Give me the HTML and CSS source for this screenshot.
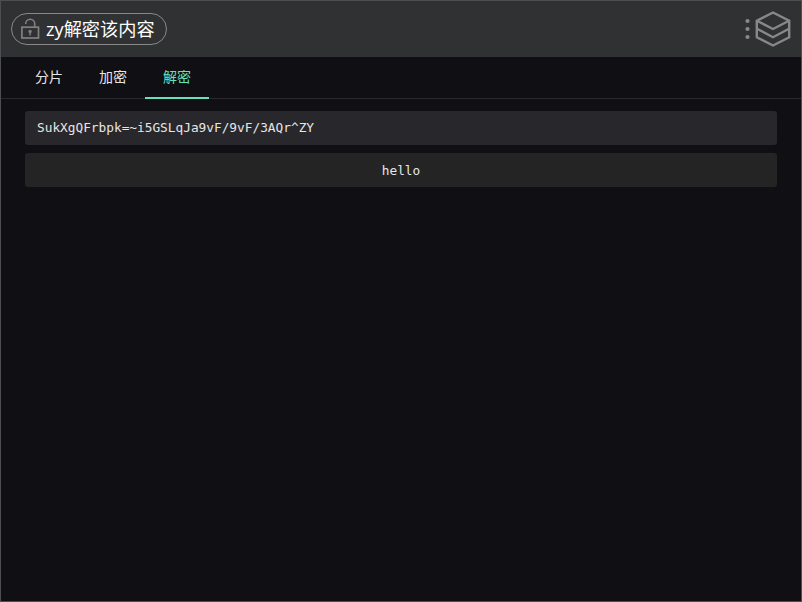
FILE: index.html
```
<!DOCTYPE html>
<html lang="zh-CN">
<head>
<meta charset="utf-8">
<title>zy解密该内容</title>
<link rel="stylesheet" href="styles.css">
</head>
<body>
<div class="window">
  <header class="header">
    <div class="pill">
      <svg class="lock" width="20" height="22" viewBox="0 0 20 22" fill="none" stroke="#808080" stroke-width="1.7">
        <rect x="1.9" y="9.2" width="16.6" height="10.8"/>
        <path d="M5.7 6V5.7a4.5 4.4 0 0 1 9 0V9" stroke-width="1.6"/>
        <path d="M10.1 13v4.5" stroke-width="1.4"/>
        <circle cx="10.1" cy="13.4" r="1.6" fill="#808080" stroke="none"/>
      </svg>
      <span class="title">zy解密该内容</span>
    </div>
    <div class="brand">
      <svg class="dots" width="5" height="22" viewBox="0 0 5 22" fill="#888">
        <circle cx="2.5" cy="3" r="2.1"/><circle cx="2.5" cy="11" r="2.1"/><circle cx="2.5" cy="19" r="2.1"/>
      </svg>
      <svg class="logo" width="36" height="36" viewBox="0 0 36 36" fill="none" stroke="#888" stroke-width="2.4">
        <path d="M18 1.5 34.2 9.7V26.3L18 34.5 1.8 26.3V9.7Z"/>
        <path d="M2 9.7 18 18 34 9.7M2 17.8 18 26.2 34 17.8"/>
      </svg>
    </div>
  </header>
  <nav class="tabs">
    <div class="tab">分片</div>
    <div class="tab">加密</div>
    <div class="tab active">解密</div>
  </nav>
  <main class="content">
    <div class="field">SukXgQFrbpk=~i5GSLqJa9vF/9vF/3AQr^ZY</div>
    <div class="result">hello</div>
  </main>
</div>
</body>
</html>
```
FILE: styles.css
```
* { box-sizing: border-box; }
body { margin: 0; background: #101014; }
.window {
  height: 602px;
  border: 1px solid #4d4e4f;
  background: #101014;
  color: #e6e6e6;
  font-family: "Noto Sans CJK SC", sans-serif;
}
.header {
  display: flex;
  align-items: center;
  justify-content: space-between;
  height: 56px;
  padding: 0 10px;
  background: #303133;
}
.pill {
  display: flex;
  align-items: center;
  width: 156px;
  height: 32px;
  padding-left: 8px;
  border: 1px solid #888;
  border-radius: 16px;
}
.lock { flex: none; }
.title {
  margin-left: 6px;
  color: #fff;
  font-family: "Open Sans", "Noto Sans CJK SC", sans-serif;
  font-size: 18.2px;
  line-height: 30px;
  white-space: nowrap;
}
.brand { display: flex; align-items: center; gap: 5px; }
.dots { margin-bottom: 0; }
.tabs {
  display: flex;
  height: 42px;
  padding-left: 16px;
  border-bottom: 1px solid #2a2a2e;
}
.tab {
  width: 64px;
  height: 42px;
  font-size: 14px;
  line-height: 38px;
  text-align: center;
}
.active { color: #63e2b7; border-bottom: 2px solid #63e2b7; }
.content {
  display: flex;
  flex-direction: column;
  gap: 8px;
  padding: 12px 24px;
  font-family: "DejaVu Sans Mono", monospace;
  font-size: 12.79px;
}
.field, .result {
  height: 34px;
  padding: 0 12px;
  border-radius: 3px;
  line-height: 34px;
}
.field { background: #28282c; }
.result { background: #242425; line-height: 36px; text-align: center; }
```
